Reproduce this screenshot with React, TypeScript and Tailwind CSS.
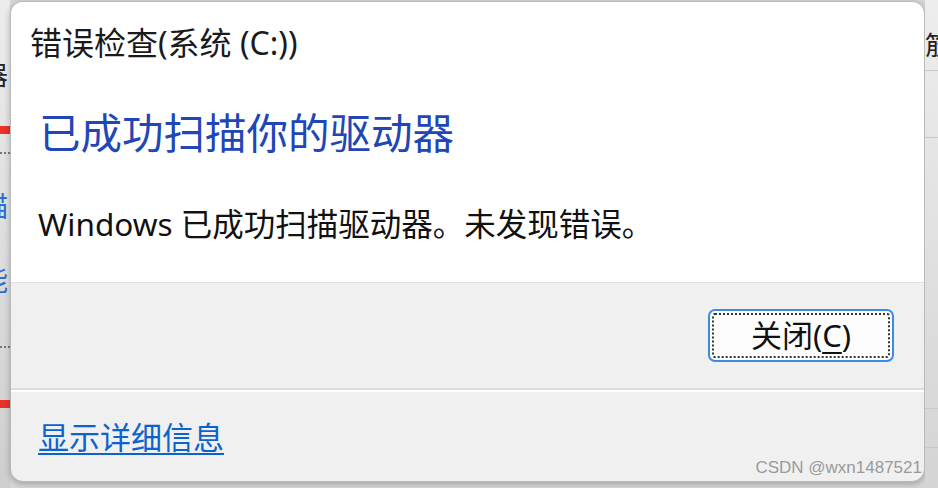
import React from 'react';

const font = { fontFamily: '"Noto Sans", "Noto Sans CJK SC", sans-serif' };

const LeftSliver = () => (
    <div className="w-[10px] shrink-0 flex flex-col bg-gradient-to-b from-[#ececec] to-[#cfcfcf] overflow-hidden">
        <div className="h-[62px]" />
        <div className="h-[26px] w-[10px] text-[26px] leading-[26px] text-[#222] overflow-hidden">
            <span className="ml-[-18px]">器</span>
        </div>
        <div className="h-[38px]" />
        <div className="h-[8px] bg-[#e8322a]" />
        <div className="h-[18px]" />
        <div className="h-0 border-t-2 border-dotted border-[#777]" />
        <div className="h-[32px]" />
        <div className="h-[40px] text-[28px] leading-[40px] text-[#2a6fd0] overflow-hidden">
            <span className="ml-[-20px]">锚</span>
        </div>
        <div className="h-[34px]" />
        <div className="h-[40px] text-[28px] leading-[40px] text-[#2a6fd0] overflow-hidden">
            <span className="ml-[-20px]">能</span>
        </div>
        <div className="h-[46px]" />
        <div className="h-0 border-t-2 border-dotted border-[#777]" />
        <div className="h-[52px]" />
        <div className="h-[8px] bg-[#e8322a]" />
    </div>
);

const RightSliver = () => (
    <div className="w-[14px] shrink-0 flex flex-col bg-gradient-to-b from-[#ededed] to-[#d4d4d4] overflow-hidden">
        <div className="h-[28px]" />
        <div className="h-[34px] text-[26px] leading-[34px] text-[#222] overflow-hidden">
            <span>筋</span>
        </div>
        <div className="h-[8px]" />
        <div className="h-px bg-[#c8c8c8]" />
        <div className="h-[66px]" />
        <div className="h-px bg-[#c8c8c8]" />
        <div className="h-[270px]" />
        <div className="h-px bg-[#c8c8c8]" />
        <div className="h-[38px]" />
        <div className="h-px bg-[#c8c8c8]" />
    </div>
);

const App = () => {
    return (
        <div className="w-[938px] h-[488px] flex bg-[#d6d6d6] overflow-hidden" style={font}>
            <LeftSliver />
            <div className="w-[915px] h-[481px] mt-px shrink-0 flex flex-col rounded-[13px] border border-[#b9b9b9] bg-[#f0f0f0] overflow-hidden shadow-[0_2px_6px_rgba(0,0,0,0.25)]">
                <div className="bg-white flex flex-col border-b border-[#e0e0e0] h-[281px]">
                    <div className="h-[82px] flex items-center pl-[19px] text-[32px] text-[#1a1a1a]">
                        错误检查(系统 (C:))
                    </div>
                    <div className="h-[98px] flex items-center pl-[28px] text-[41.5px] text-[#2146b6]">
                        已成功扫描你的驱动器
                    </div>
                    <div className="h-[84px] flex items-center pl-[27px] text-[31.5px] text-[#111]">
                        Windows 已成功扫描驱动器。未发现错误。
                    </div>
                </div>
                <div className="h-[105px] flex items-center justify-end pr-[30px]">
                    <button className="w-[186px] h-[53px] rounded-[7px] border-2 border-[#3a8ee0] bg-[#fdfdfd] p-[2px]">
                        <div className="w-full h-full rounded-[3px] border-2 border-dotted border-[#333] flex items-center justify-center text-[31px] text-[#111] leading-none">
                            关闭(<span className="underline underline-offset-[5px] decoration-2">C</span>)
                        </div>
                    </button>
                </div>
                <div className="h-[2px] bg-[#dcdcdc]" />
                <div className="h-[2px] bg-white" />
                <div className="flex-1 flex flex-col">
                    <div className="h-[90px] flex items-center pl-[27px] text-[31px] text-[#0b63cf]">
                        <span className="underline underline-offset-[4px] decoration-2">显示详细信息</span>
                    </div>
                    <div className="flex justify-end pr-[2px] mt-[-24px]">
                        <span className="text-[17px] leading-[20px] text-[#9a9a9a]" style={{ fontFamily: '"Liberation Sans", "Noto Sans CJK SC", sans-serif' }}>
                            CSDN @wxn1487521
                        </span>
                    </div>
                </div>
            </div>
            <RightSliver />
        </div>
    );
};

export default App;
